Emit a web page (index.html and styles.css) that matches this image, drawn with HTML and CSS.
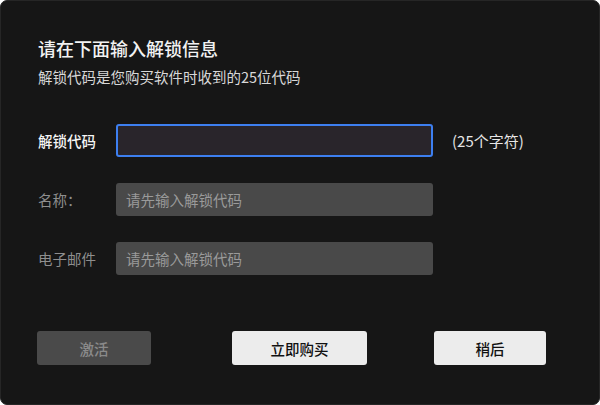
FILE: index.html
```html
<!DOCTYPE html>
<html lang="zh">
<head>
<meta charset="utf-8">
<link rel="stylesheet" href="styles.css">
</head>
<body>
<div class="dialog">
  <h1 class="title">请在下面输入解锁信息</h1>
  <p class="subtitle">解锁代码是您购买软件时收到的25位代码</p>
  <div class="form">
    <div class="row">
      <label class="label label-active">解锁代码</label>
      <div class="input input-focus"></div>
      <span class="hint">(25个字符)</span>
    </div>
    <div class="row">
      <label class="label">名称：</label>
      <div class="input input-disabled">请先输入解锁代码</div>
    </div>
    <div class="row">
      <label class="label">电子邮件</label>
      <div class="input input-disabled">请先输入解锁代码</div>
    </div>
  </div>
  <div class="actions">
    <button class="btn btn-disabled">激活</button>
    <button class="btn btn-light btn-buy">立即购买</button>
    <button class="btn btn-light btn-later">稍后</button>
  </div>
</div>
</body>
</html>
```
FILE: styles.css
```css
html, body {
  margin: 0;
  padding: 0;
  background: #ffffff;
}
body {
  width: 600px;
  height: 405px;
  font-family: "Noto Sans CJK SC", "Noto Sans", sans-serif;
}
.dialog {
  box-sizing: border-box;
  width: 600px;
  height: 405px;
  background: #161616;
  border: 1px solid #262626;
  border-radius: 7px;
  padding: 34px 0 0 37px;
  color: #fff;
}
.title {
  margin: 0;
  font-size: 18px;
  font-weight: 500;
  line-height: 26px;
  color: #f2f2f2;
}
.subtitle {
  margin: 6px 0 0;
  font-size: 14.5px;
  line-height: 20px;
  color: #d8d8d8;
}
.form {
  margin-top: 37px;
  display: flex;
  flex-direction: column;
  gap: 26px;
}
.row {
  display: flex;
  align-items: center;
}
.label {
  width: 78px;
  font-size: 14.5px;
  color: #8e8e8e;
}
.label-active {
  color: #f5f5f5;
  font-weight: 500;
}
.input {
  box-sizing: border-box;
  width: 317px;
  height: 33px;
  border-radius: 3px;
  font-size: 14.5px;
  line-height: 33px;
  padding-left: 10px;
}
.input-focus {
  background: #29252b;
  border: 2px solid #3d7ff0;
}
.input-disabled {
  background: #494949;
  color: #9a9a9a;
}
.hint {
  margin-left: 19px;
  font-size: 15px;
  color: #e6e6e6;
}
.actions {
  margin-top: 56px;
  display: flex;
  align-items: center;
}
.btn {
  box-sizing: border-box;
  height: 34px;
  border: none;
  border-radius: 3px;
  font-family: inherit;
  font-size: 14.5px;
  font-weight: 500;
  padding: 0;
}
.btn-disabled {
  width: 114px;
  background: #4a4a4a;
  color: #8a8a8a;
  margin-left: -1px;
}
.btn-light {
  background: #ececec;
  color: #111;
}
.btn-buy {
  width: 135px;
  margin-left: 81px;
}
.btn-later {
  width: 112px;
  margin-left: 67px;
}
```
